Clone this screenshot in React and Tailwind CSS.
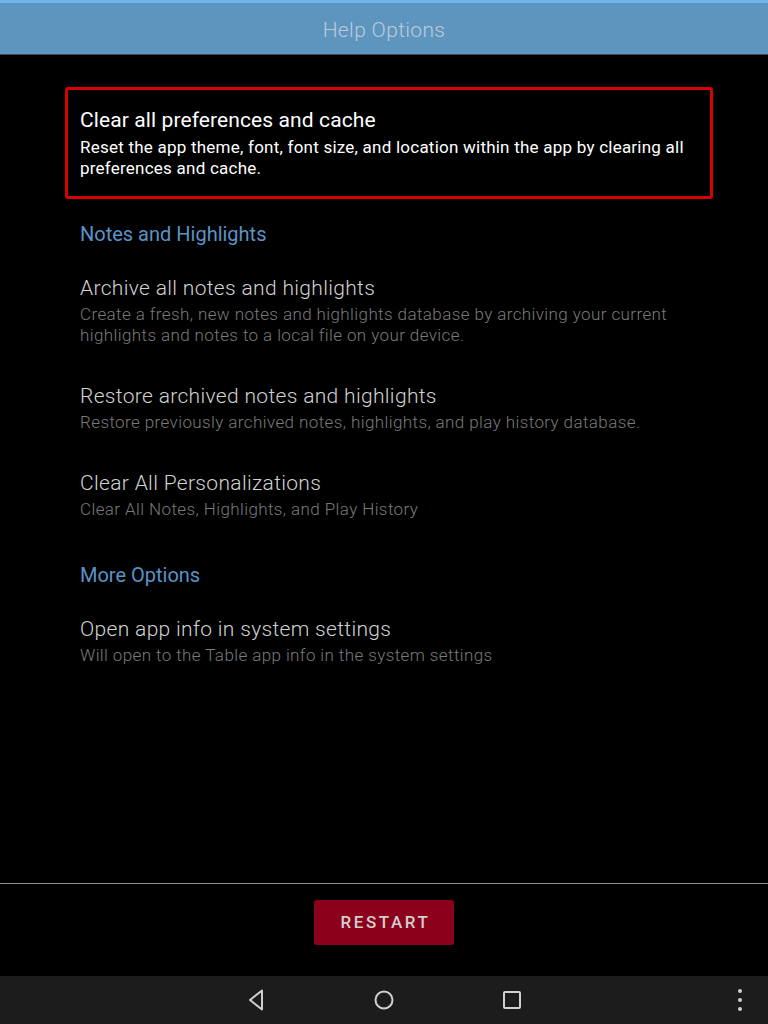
import React from 'react'

const font = { fontFamily: 'Roboto, "Noto Sans", sans-serif' }

function Item({ title, desc, className = '' }) {
  return (
    <div className={`pt-[19px] pb-[18px] ${className}`}>
      <div className="text-[21px] leading-[26px] font-light tracking-[0.33px] text-[#d2d2d2]">{title}</div>
      <div className="mt-[3px] text-[17px] leading-[21px] font-light tracking-[0.4px] text-[#7a7a7a]">{desc}</div>
    </div>
  )
}

function SectionHeader({ children, className = '' }) {
  return <div className={`text-[20px] leading-[24px] text-[#5b93c6] ${className}`}>{children}</div>
}

export default function App() {
  return (
    <div className="flex h-[1024px] w-[768px] flex-col bg-black font-['Roboto',sans-serif]">
      {/* Title bar */}
      <div className="h-[3px] bg-[#6db5ec]" />
      <div className="flex h-[52px] items-center justify-center border-b border-[#4a4a4a] bg-[#5e95bf] pt-[4px]">
        <span className="text-[21px] font-light tracking-[0.35px] text-[#bccbd8]">Help Options</span>
      </div>

      {/* Options list */}
      <div className="flex-1 pl-[65px] pr-[55px] pt-[32px]">
        <div className="rounded-[3px] border-[3px] border-[#d80000] pb-[17px] pl-[12px] pr-[12px] pt-[17px]">
          <div className="text-[21px] leading-[26px] tracking-[0.1px] text-white">Clear all preferences and cache</div>
          <div className="mt-[4px] text-[17px] leading-[21px] tracking-[0.23px] text-white">
            Reset the app theme, font, font size, and location within the app by clearing all preferences and cache.
          </div>
        </div>

        <div className="pl-[15px] pr-[30px]">
          <SectionHeader className="mt-[23px] mb-[10px]">Notes and Highlights</SectionHeader>
          <Item
            title="Archive all notes and highlights"
            desc="Create a fresh, new notes and highlights database by archiving your current highlights and notes to a local file on your device."
          />
          <Item
            title="Restore archived notes and highlights"
            desc="Restore previously archived notes, highlights, and play history database."
          />
          <Item title="Clear All Personalizations" desc="Clear All Notes, Highlights, and Play History" />

          <SectionHeader className="mt-[25px] mb-[10px]">More Options</SectionHeader>
          <Item
            title="Open app info in system settings"
            desc="Will open to the Table app info in the system settings"
          />
        </div>
      </div>

      {/* Restart footer */}
      <div className="flex h-[93px] justify-center border-t border-[#8a8a8a] pt-[16px]">
        <button
          style={font}
          className="h-[45px] w-[140px] rounded-[3px] bg-[#8c001c] pl-[3px] text-[17px] font-medium tracking-[2.6px] text-[#cfcfcf]"
        >
          RESTART
        </button>
      </div>

      {/* System nav bar */}
      <div className="relative flex h-[48px] items-center justify-center bg-[#1c1c1c]">
        <div className="flex w-[128px] justify-center">
          <svg width="20" height="24" viewBox="0 0 20 24">
            <path d="M16 2.5 L4 12 L16 21.5 Z" fill="none" stroke="#d0d0d0" strokeWidth="2" strokeLinejoin="round" />
          </svg>
        </div>
        <div className="flex w-[128px] justify-center">
          <svg width="22" height="22" viewBox="0 0 22 22">
            <circle cx="11" cy="11" r="8.5" fill="none" stroke="#d0d0d0" strokeWidth="2" />
          </svg>
        </div>
        <div className="flex w-[128px] justify-center">
          <svg width="18" height="18" viewBox="0 0 18 18">
            <rect x="1" y="1" width="16" height="16" rx="1" fill="none" stroke="#d0d0d0" strokeWidth="2" />
          </svg>
        </div>
        <div className="absolute right-[26px] top-[13px] flex flex-col gap-[5px]">
          <span className="h-[4px] w-[4px] rounded-full bg-[#d0d0d0]" />
          <span className="h-[4px] w-[4px] rounded-full bg-[#d0d0d0]" />
          <span className="h-[4px] w-[4px] rounded-full bg-[#d0d0d0]" />
        </div>
      </div>
    </div>
  )
}
